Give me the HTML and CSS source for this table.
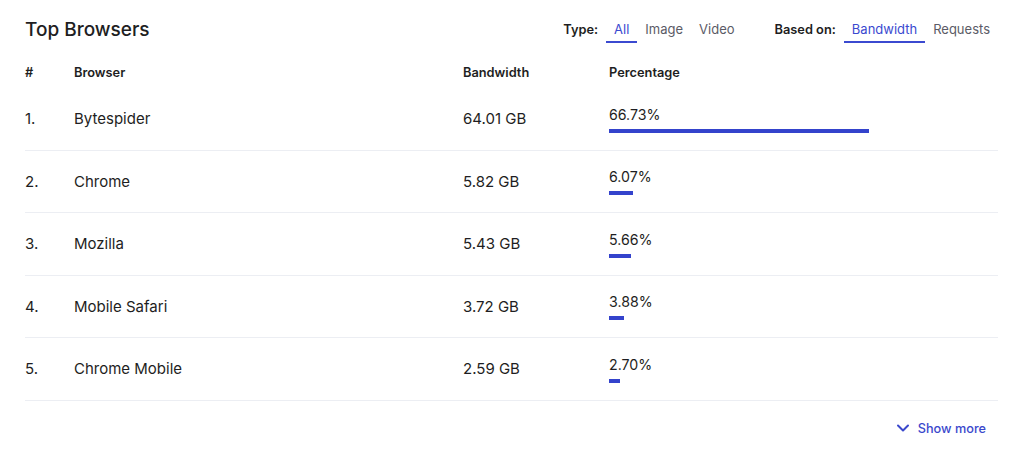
FILE: index.html
```html
<!DOCTYPE html>
<html>
<head>
<meta charset="utf-8">
<link rel="stylesheet" href="styles.css">
</head>
<body>
<div class="card">
  <div class="top">
    <h2 class="title">Top Browsers</h2>
    <div class="filters">
      <div class="group">
        <span class="label">Type:</span>
        <span class="tab active">All</span>
        <span class="tab">Image</span>
        <span class="tab">Video</span>
      </div>
      <div class="group">
        <span class="label">Based on:</span>
        <span class="tab active">Bandwidth</span>
        <span class="tab">Requests</span>
      </div>
    </div>
  </div>
  <div class="table">
    <div class="row head">
      <div>#</div><div>Browser</div><div>Bandwidth</div><div>Percentage</div>
    </div>
    <div class="row">
      <div>1.</div><div>Bytespider</div><div>64.01 GB</div>
      <div class="pct"><span>66.73%</span><div class="bar" style="width:66.73%"></div></div>
    </div>
    <div class="row">
      <div>2.</div><div>Chrome</div><div>5.82 GB</div>
      <div class="pct"><span>6.07%</span><div class="bar" style="width:6.07%"></div></div>
    </div>
    <div class="row">
      <div>3.</div><div>Mozilla</div><div>5.43 GB</div>
      <div class="pct"><span>5.66%</span><div class="bar" style="width:5.66%"></div></div>
    </div>
    <div class="row">
      <div>4.</div><div>Mobile Safari</div><div>3.72 GB</div>
      <div class="pct"><span>3.88%</span><div class="bar" style="width:3.88%"></div></div>
    </div>
    <div class="row">
      <div>5.</div><div>Chrome Mobile</div><div>2.59 GB</div>
      <div class="pct"><span>2.70%</span><div class="bar" style="width:2.70%"></div></div>
    </div>
  </div>
  <div class="more">
    <button class="more-btn">
      <svg width="14" height="14" viewBox="0 0 14 14"><path d="M2 4.5 L7 9.5 L12 4.5" fill="none" stroke="#3a48cc" stroke-width="2" stroke-linecap="round" stroke-linejoin="round"/></svg>
      <span>Show more</span>
    </button>
  </div>
</div>
</body>
</html>
```

FILE: styles.css
```css
* { box-sizing: border-box; }
html, body { margin: 0; padding: 0; background: #fff; }
body {
  font-family: Inter, "Noto Sans", "Liberation Sans", sans-serif;
  color: #1e1e22;
  width: 1024px;
  height: 463px;
  overflow: hidden;
}
.card {
  padding: 15px 26px 0 25px;
}
.top {
  display: flex;
  align-items: center;
  justify-content: space-between;
  height: 28px;
}
.title {
  margin: 0;
  font-size: 19px;
  font-weight: 500;
  letter-spacing: 0;
  color: #1e1e22;
}
.filters {
  display: flex;
  gap: 32px;
  align-items: center;
  margin-top: 1px;
}
.group {
  display: flex;
  align-items: center;
}
.label {
  font-size: 12.8px;
  font-weight: 600;
  color: #1e1e22;
  margin-right: 8px;
}
.tab {
  font-size: 13px;
  color: #5b5b66;
  padding: 5px 8px 4px;
  border-bottom: 2px solid transparent;
}
.tab.active {
  color: #3b4ad0;
  border-bottom-color: #3b4ad0;
}
.table {
  margin-top: 13px;
}
.row {
  display: grid;
  grid-template-columns: 49px 389px 146px 1fr;
  align-items: center;
  height: 62.5px;
  border-bottom: 1px solid #eceef3;
  font-size: 15px;
}
.row.head {
  height: 32px;
  border-bottom: none;
  font-size: 12.8px;
  font-weight: 600;
}
.pct {
  display: flex;
  flex-direction: column;
  align-items: flex-start;
  gap: 5px;
  margin-top: 1px;
  font-size: 14.2px;
}
.pct span {
  line-height: 18px;
}
.bar {
  height: 4px;
  background: #3443cc;
}
.more {
  display: flex;
  justify-content: flex-end;
  padding-top: 14px;
}
.more-btn {
  display: flex;
  align-items: center;
  gap: 8px;
  background: none;
  border: none;
  font-family: inherit;
  font-size: 12.7px;
  font-weight: 500;
  color: #3a48cc;
  padding: 6px 12px 6px 12px;
  cursor: pointer;
}
```
